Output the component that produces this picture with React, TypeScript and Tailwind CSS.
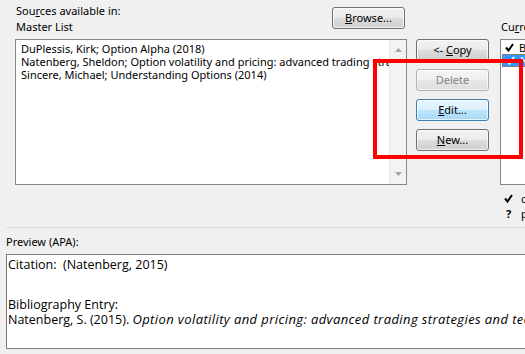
import React from 'react';

const btnBase =
  'h-[22px] w-[73px] rounded-[3px] border text-[11px] leading-[20px] text-center shadow-[inset_0_0_0_1px_rgba(255,255,255,0.7)]';
const btnNormal =
  'border-[#707070] text-black bg-[linear-gradient(#f2f2f2_0%,#ebebeb_50%,#dddddd_50%,#cfcfcf_100%)]';
const btnHot =
  'border-[#3c7fb1] text-black bg-[linear-gradient(#eaf6fd_0%,#d9f0fc_50%,#bee6fd_50%,#a7d9f5_100%)]';
const btnDisabled =
  'border-[#adb2b5] text-[#838383] bg-[linear-gradient(#f4f4f4_0%,#f0f0f0_50%,#e6e6e6_50%,#e0e0e0_100%)]';

function Check({ color = '#000' }: { color?: string }) {
  return (
    <svg width="9" height="9" viewBox="0 0 9 9" className="shrink-0">
      <path d="M1 4.5 L3.5 7.5 L8 1" fill="none" stroke={color} strokeWidth="2" />
    </svg>
  );
}

function Arrow({ up }: { up?: boolean }) {
  return (
    <svg width="7" height="4" viewBox="0 0 7 4">
      <path d={up ? 'M0 4 L3.5 0 L7 4 Z' : 'M0 0 L7 0 L3.5 4 Z'} fill="#a3a3a3" />
    </svg>
  );
}

export default function App() {
  const sources = [
    'DuPlessis, Kirk; Option Alpha (2018)',
    'Natenberg, Sheldon; Option volatility and pricing: advanced trading strategies and techniques (2015)',
    'Sincere, Michael; Understanding Options (2014)',
  ];

  return (
    <div className="relative w-[525px] h-[354px] overflow-hidden bg-[#f0f0f0] text-[11px] text-black font-['Noto_Sans',sans-serif]">
      {/* top part: master list, buttons, current list */}
      <div className="flex h-[227px]">
        <div className="ml-[15px] w-[392px] shrink-0 flex flex-col">
          <div className="flex justify-between h-[39px]">
            <div className="pt-[3px] pl-[1px] leading-[16px]">
              <div>
                Sou<u>r</u>ces available in:
              </div>
              <div>Master List</div>
            </div>
            <button className={`${btnBase} ${btnNormal} mt-[7px] mr-[2px] w-[72px] h-[21px] leading-[19px]`}>
              <u>B</u>rowse...
            </button>
          </div>
          <div className="h-[146px] border border-[#828790] bg-white flex">
            <div className="flex-1 overflow-hidden pl-[5px] pt-[2px] leading-[13px] whitespace-nowrap">
              {sources.map((s) => (
                <div key={s}>{s}</div>
              ))}
            </div>
            <div className="w-[17px] bg-[#f3f3f3] border-l border-[#e6e6e6] flex flex-col justify-between items-center py-[8px]">
              <Arrow up />
              <Arrow />
            </div>
          </div>
        </div>

        <div className="ml-[9px] pt-[39px] flex flex-col gap-[8px] shrink-0">
          <button className={`${btnBase} ${btnNormal}`}>
            &lt;- <u>C</u>opy
          </button>
          <button className={`${btnBase} ${btnDisabled}`}>Delete</button>
          <button className={`${btnBase} ${btnHot}`}>
            <u>E</u>dit...
          </button>
          <button className={`${btnBase} ${btnNormal}`}>
            <u>N</u>ew...
          </button>
        </div>

        <div className="ml-[11px] w-[200px] shrink-0 pt-[19px] flex flex-col">
          <div className="leading-[16px] pl-[1px]">
            Cu<u>r</u>rent list
          </div>
          <div className="mt-[4px] h-[146px] border border-[#828790] bg-white pt-[1px] leading-[13px] whitespace-nowrap">
            <div className="flex items-center h-[13px] pl-[4px] gap-[5px]">
              <Check />
              <span>Black, Fischer; Options Basics (2016)</span>
            </div>
            <div className="flex items-center h-[13px] ml-[1px] pl-[3px] gap-[5px] bg-[#3399ff] text-white border border-dotted border-[#cc6600]">
              <Check color="#fff" />
              <span>Natenberg, Sheldon; Option volatility</span>
            </div>
          </div>
          <div className="mt-[6px] pl-[4px] leading-[15px] font-bold">
            <div className="flex items-center gap-[8px] h-[15px]">
              <Check />
              <span className="font-normal">cited source</span>
            </div>
            <div className="flex items-center gap-[8px] h-[15px]">
              <span className="w-[9px] text-center">?</span>
              <span className="font-normal">placeholder source</span>
            </div>
          </div>
        </div>
      </div>

      <div className="ml-[6px] h-px bg-[#d5dfe5]" />

      {/* preview */}
      <div className="ml-[6px] mt-[6px] leading-[16px]">Preview (APA):</div>
      <div className="ml-[6px] mt-[4px] w-[600px] h-[95px] border border-[#7e7e7e] bg-white pl-[1px] pt-[3px] leading-[14px] text-[12.5px] whitespace-nowrap font-['Open_Sans',sans-serif]">
        <div>Citation:&nbsp; (Natenberg, 2015)</div>
        <div className="mt-[26px]">Bibliography Entry:</div>
        <div>
          Natenberg, S. (2015).{' '}
          <i className="text-[13px] tracking-[0.4px]">
            Option volatility and pricing: advanced trading strategies and techniques.
          </i>
        </div>
      </div>

      {/* red annotation frame */}
      <div className="absolute left-[373px] top-[59px] w-[150px] h-[100px] border-[4px] border-[#ff0000] pointer-events-none" />
    </div>
  );
}
